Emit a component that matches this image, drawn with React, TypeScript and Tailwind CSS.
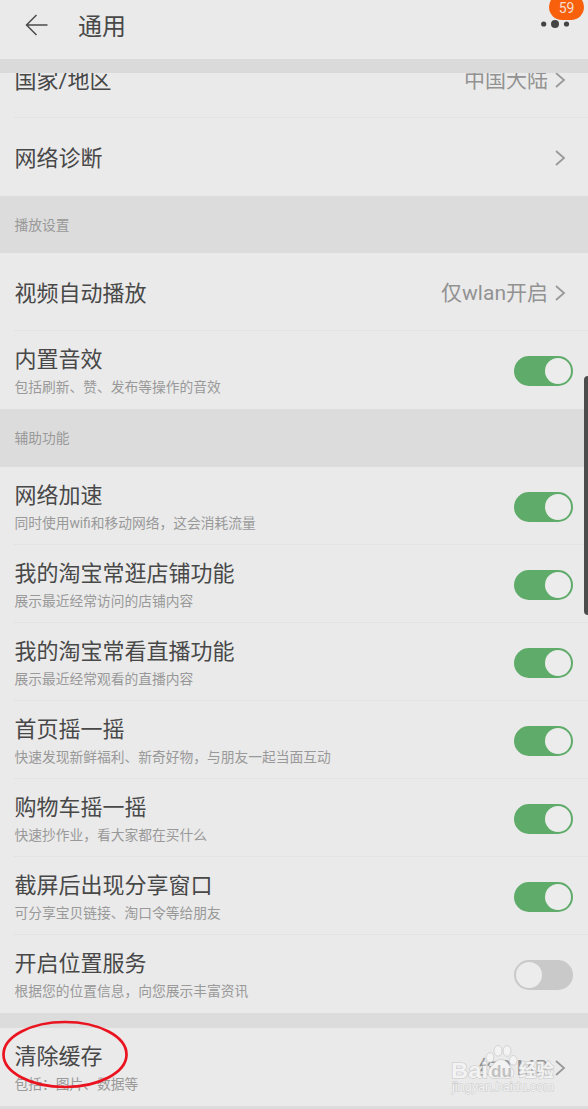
import React from 'react';
import clsx from 'clsx';

type RowProps = {
  title: string;
  desc?: string;
  value?: string;
  on?: boolean;
  last?: boolean;
  children?: React.ReactNode;
};

function Chevron() {
  return (
    <svg className="ml-[7px] h-[18px] w-3 shrink-0" viewBox="0 0 12 18" fill="none" stroke="#999999" strokeWidth="1.8">
      <path d="M1 2L9 9L1 16" />
    </svg>
  );
}

function Toggle({ on }: { on: boolean }) {
  return (
    <div
      className={clsx(
        'mt-[3px] flex h-[30px] w-[59px] items-center rounded-full px-[2px]',
        on ? 'justify-end bg-[#5fab69]' : 'justify-start bg-[#c9c9c9]'
      )}
    >
      <div className="h-[26px] w-[26px] rounded-full bg-[#ececec]" />
    </div>
  );
}

function Row({ title, desc, value, on, last, children }: RowProps) {
  return (
    <div className="h-[78px] shrink-0 pl-[14px]">
      <div className={clsx('relative flex h-full items-center justify-between border-b pr-[15px]', last ? 'border-transparent' : 'border-[#e3e3e3]')}>
        <div className={clsx('whitespace-nowrap pl-[0.4px]', desc ? 'pt-[3px]' : 'pt-1')}>
          <div className="text-[22px] leading-[32px] text-[#484848]">{title}</div>
          {desc && <div className="-mt-px text-[13.75px] leading-6 text-[#999999]">{desc}</div>}
        </div>
        {value !== undefined && (
          <div className="flex items-center pr-[6px] pt-[3px] text-[21px] leading-8 text-[#929292]">
            <span>{value}</span>
            <Chevron />
          </div>
        )}
        {on !== undefined && <Toggle on={on} />}
        {children}
      </div>
    </div>
  );
}

function Section({ name, className }: { name: string; className: string }) {
  return (
    <div className={clsx('flex shrink-0 items-center bg-[#dcdcdc] pl-[14.4px] pt-px text-[13.75px] text-[#999999]', className)}>
      {name}
    </div>
  );
}

function Watermark() {
  return (
    <svg className="absolute right-[27px] top-[14px] h-[58px] w-[112px]" viewBox="0 0 112 58">
      <g
        fill="#f3f3f3"
        stroke="#c9c9c9"
        strokeWidth="1.2"
        paintOrder="stroke"
        fontFamily="'Liberation Sans', 'Noto Sans CJK SC', sans-serif"
      >
        <text x="2" y="36" fontSize="22" fontWeight="700" textLength="37" lengthAdjust="spacingAndGlyphs">Bai</text>
        <text x="70" y="35" fontSize="18" fontWeight="700" textLength="35" lengthAdjust="spacingAndGlyphs">经验</text>
        <text x="3" y="49" fontSize="12" strokeWidth="0.9" textLength="102" lengthAdjust="spacingAndGlyphs">jingyan.baidu.com</text>
      </g>
      <g fill="#f3f3f3" stroke="#cccccc" strokeWidth="0.8">
        <ellipse cx="41" cy="15.5" rx="3.9" ry="4.8" />
        <ellipse cx="49" cy="8.8" rx="4" ry="5.3" />
        <ellipse cx="58" cy="9" rx="4" ry="5.3" />
        <ellipse cx="64.3" cy="18.3" rx="3.9" ry="4.8" />
        <path d="M52 17.5C57 17.5 59 22 63 26C67 31 64.5 37 59 36.5C55 36 50 36 46 36.5C40 37 37 31 41 26C45 22 47 17.5 52 17.5Z" />
      </g>
      <text
        x="42"
        y="35"
        fontSize="16"
        fontWeight="700"
        fill="#c2c2c2"
        textLength="21"
        lengthAdjust="spacingAndGlyphs"
        fontFamily="'Liberation Sans', sans-serif"
      >
        du
      </text>
    </svg>
  );
}

export default function App() {
  return (
    <div className="relative flex h-[1109px] w-[588px] flex-col overflow-hidden bg-[#eaeaea] font-['Roboto','Noto_Sans_CJK_SC',sans-serif]">
      {/* Header */}
      <header className="relative flex h-[59px] shrink-0 items-center pb-[9px] pl-[25px]">
        <svg className="h-6 w-6" viewBox="0 0 24 24" fill="none" stroke="#4b4b4b" strokeWidth="1.5">
          <path d="M11.5 2L1.5 12L11.5 22M1.5 12H22.5" />
        </svg>
        <h1 className="ml-[29px] pt-[3px] text-2xl text-[#484848]">通用</h1>
        <svg className="absolute right-[17px] top-[18px] h-3 w-[32px]" viewBox="0 0 32 12" fill="#444444">
          <circle cx="4.7" cy="6" r="2.6" />
          <circle cx="16" cy="6" r="4" />
          <circle cx="27.5" cy="6" r="2.6" />
        </svg>
        <span className="absolute right-[4px] top-[-6px] flex h-[26px] w-[35px] items-center justify-center rounded-full bg-[#f9600c] pt-[2px] text-[14px] leading-4 text-[#f6ded1]">
          59
        </span>
      </header>
      <div className="h-[14px] shrink-0 bg-[#dadada]" />

      {/* First row is scrolled partly under the header */}
      <div className="flex h-[45px] shrink-0 flex-col justify-end overflow-hidden">
        <Row title="国家/地区" value="中国大陆" />
      </div>
      <Row title="网络诊断" value="" last />

      <Section name="播放设置" className="h-[57px]" />
      <Row title="视频自动播放" value="仅wlan开启" />
      <Row title="内置音效" desc="包括刷新、赞、发布等操作的音效" on last />

      <Section name="辅助功能" className="h-[58px]" />
      <Row title="网络加速" desc="同时使用wifi和移动网络，这会消耗流量" on />
      <Row title="我的淘宝常逛店铺功能" desc="展示最近经常访问的店铺内容" on />
      <Row title="我的淘宝常看直播功能" desc="展示最近经常观看的直播内容" on />
      <Row title="首页摇一摇" desc="快速发现新鲜福利、新奇好物，与朋友一起当面互动" on />
      <Row title="购物车摇一摇" desc="快速抄作业，看大家都在买什么" on />
      <Row title="截屏后出现分享窗口" desc="可分享宝贝链接、淘口令等给朋友" on />
      <Row title="开启位置服务" desc="根据您的位置信息，向您展示丰富资讯" on={false} last />

      <div className="h-[15px] shrink-0 bg-[#dcdcdc]" />
      <Row title="清除缓存" desc="包括：图片、数据等" value="约0 MB" last>
        <Watermark />
        <svg className="absolute left-[-13px] top-[-9px] h-[70px] w-[128px]" viewBox="0 0 128 70" fill="none" stroke="#ea1420" strokeWidth="2.7">
          <ellipse cx="64" cy="35.5" rx="61.5" ry="32.5" />
        </svg>
      </Row>
      <div className="h-[3px] shrink-0 bg-[#dcdcdc]" />

      {/* Side panel handle */}
      <div className="absolute right-0 top-[376px] h-[239px] w-[4px] rounded-l-md bg-[#4c4c4c]" />
    </div>
  );
}
